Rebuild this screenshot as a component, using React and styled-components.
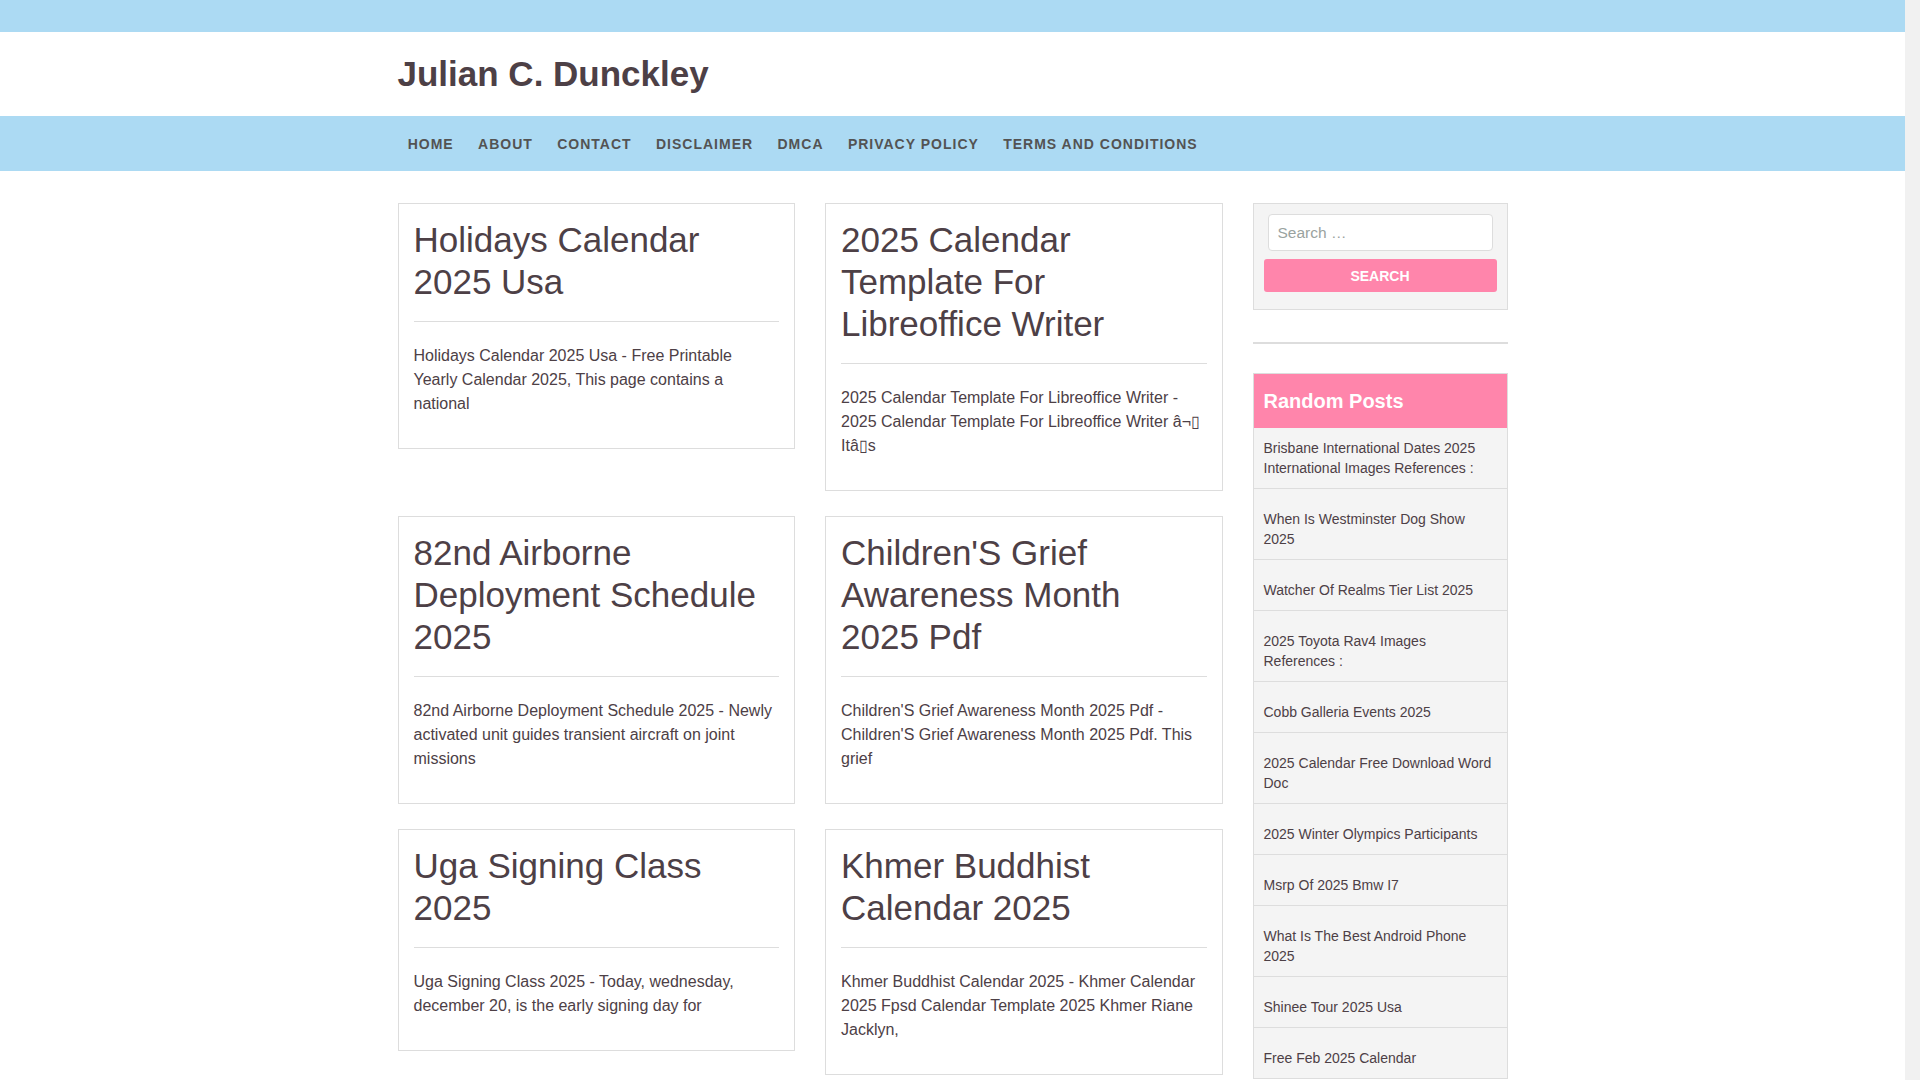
import React from "react";
import styled, { createGlobalStyle } from "styled-components";

const GlobalStyle = createGlobalStyle`
  html {
    margin: 0;
    padding: 0 15px 0 0;
    background: #f1f1f1;
  }
  body {
    margin: 0;
    padding: 0;
    background: #fff;
    font-family: "Liberation Sans", Arial, sans-serif;
    color: #4d4046;
    -webkit-font-smoothing: antialiased;
  }
  * { box-sizing: border-box; }
`;

const TopBar = styled.div`
  height: 32px;
  background: #acdaf3;
`;

const Container = styled.div`
  max-width: 1140px;
  margin: 0 auto;
  padding: 0 15px;
`;

const Header = styled.header`
  height: 84px;
  background: #fff;
`;

const HeaderInner = styled(Container)`
  height: 100%;
  display: flex;
  align-items: center;
`;

const SiteTitle = styled.h1`
  margin: 0;
  font-size: 35px;
  line-height: 42px;
  font-weight: 700;
  color: #4d4046;
`;

const NavBar = styled.nav`
  height: 55px;
  background: #acdaf3;
`;

const NavList = styled(Container)`
  height: 100%;
  display: flex;
  align-items: center;
`;

const NavItems = styled.ul`
  list-style: none;
  margin: 0 0 0 -2px;
  padding: 0;
  display: flex;
`;

const NavLink = styled.li`
  padding: 0 12.2px;
  font-size: 14px;
  font-weight: 700;
  letter-spacing: 1px;
  text-transform: uppercase;
  color: #535353;
  line-height: 20px;
`;

const Main = styled(Container)`
  display: grid;
  grid-template-columns: 825px 255px;
  column-gap: 30px;
  align-items: start;
  padding-top: 32px;
  padding-bottom: 60px;
`;

const PostGrid = styled.div`
  display: grid;
  grid-template-columns: 1fr 1fr;
  column-gap: 30px;
  row-gap: 25px;
  align-items: start;
`;

const Card = styled.article`
  border: 1px solid #ddd;
  background: #fff;
  padding: 15px;
`;

const CardTitle = styled.h2`
  margin: 0 0 18px;
  font-size: 35px;
  line-height: 42px;
  font-weight: 400;
  color: #4d4046;
`;

const Rule = styled.hr`
  margin: 0 0 22px;
  border: 0;
  border-top: 1px solid #ddd;
`;

const Excerpt = styled.p`
  margin: 0 0 17px;
  font-size: 16px;
  line-height: 24px;
  color: #4d4046;
`;

const Sidebar = styled.aside`
  display: flex;
  flex-direction: column;
`;

const SearchBox = styled.form`
  border: 1px solid #ddd;
  background: #f4f4f4;
  padding: 10px 10px 17px;
  display: flex;
  flex-direction: column;
  gap: 8px;
`;

const SearchInput = styled.input`
  margin: 0 4px;
  height: 37px;
  border: 1px solid #ddd;
  border-radius: 4px;
  background: #fff;
  padding: 0 9px;
  font-family: "Liberation Sans", Arial, sans-serif;
  font-size: 15.5px;
  color: #4d4046;
  outline: none;
  &::placeholder { color: #9aa3a0; }
`;

const SearchButton = styled.button`
  height: 33px;
  border: 0;
  border-radius: 3px;
  background: #ff85ab;
  color: #fff;
  font-family: "Liberation Sans", Arial, sans-serif;
  font-size: 14px;
  font-weight: 700;
  text-transform: uppercase;
  cursor: pointer;
`;

const Divider = styled.div`
  height: 2px;
  background: #ddd;
  margin: 32px 0 29px;
`;

const Widget = styled.section`
  border: 1px solid #ddd;
  background: #f4f4f4;
`;

const WidgetTitle = styled.h3`
  margin: 0;
  background: #ff85ab;
  color: #fff;
  font-size: 20px;
  line-height: 24px;
  font-weight: 700;
  padding: 15px 10px;
`;

const PostList = styled.ul`
  list-style: none;
  margin: 0;
  padding: 0;
`;

const PostItem = styled.li`
  padding: 10px;
  font-size: 14px;
  line-height: 20px;
  color: #4d4046;
  & + & {
    border-top: 1px solid #ddd;
    padding-top: 20px;
  }
`;

const navItems = ["Home", "About", "Contact", "Disclaimer", "DMCA", "Privacy Policy", "Terms and Conditions"];

const posts = [
  {
    title: "Holidays Calendar 2025 Usa",
    excerpt: "Holidays Calendar 2025 Usa - Free Printable Yearly Calendar 2025, This page contains a national",
  },
  {
    title: "2025 Calendar Template For Libreoffice Writer",
    excerpt: "2025 Calendar Template For Libreoffice Writer - 2025 Calendar Template For Libreoffice Writer â¬▯ Itâ▯s",
  },
  {
    title: "82nd Airborne Deployment Schedule 2025",
    excerpt: "82nd Airborne Deployment Schedule 2025 - Newly activated unit guides transient aircraft on joint missions",
  },
  {
    title: "Children'S Grief Awareness Month 2025 Pdf",
    excerpt: "Children'S Grief Awareness Month 2025 Pdf - Children'S Grief Awareness Month 2025 Pdf. This grief",
  },
  {
    title: "Uga Signing Class 2025",
    excerpt: "Uga Signing Class 2025 - Today, wednesday, december 20, is the early signing day for",
  },
  {
    title: "Khmer Buddhist Calendar 2025",
    excerpt: "Khmer Buddhist Calendar 2025 - Khmer Calendar 2025 Fpsd Calendar Template 2025 Khmer Riane Jacklyn,",
  },
];

const randomPosts = [
  "Brisbane International Dates 2025 International Images References :",
  "When Is Westminster Dog Show 2025",
  "Watcher Of Realms Tier List 2025",
  "2025 Toyota Rav4 Images References :",
  "Cobb Galleria Events 2025",
  "2025 Calendar Free Download Word Doc",
  "2025 Winter Olympics Participants",
  "Msrp Of 2025 Bmw I7",
  "What Is The Best Android Phone 2025",
  "Shinee Tour 2025 Usa",
  "Free Feb 2025 Calendar",
];

export default function App() {
  return (
    <>
      <GlobalStyle />
      <TopBar />
      <Header>
        <HeaderInner>
          <SiteTitle>Julian C. Dunckley</SiteTitle>
        </HeaderInner>
      </Header>
      <NavBar>
        <NavList>
          <NavItems>
            {navItems.map((n) => (
              <NavLink key={n}>{n}</NavLink>
            ))}
          </NavItems>
        </NavList>
      </NavBar>
      <Main>
        <PostGrid>
          {posts.map((p) => (
            <Card key={p.title}>
              <CardTitle>{p.title}</CardTitle>
              <Rule />
              <Excerpt>{p.excerpt}</Excerpt>
            </Card>
          ))}
        </PostGrid>
        <Sidebar>
          <SearchBox onSubmit={(e) => e.preventDefault()}>
            <SearchInput type="search" placeholder="Search …" />
            <SearchButton type="submit">Search</SearchButton>
          </SearchBox>
          <Divider />
          <Widget>
            <WidgetTitle>Random Posts</WidgetTitle>
            <PostList>
              {randomPosts.map((r) => (
                <PostItem key={r}>{r}</PostItem>
              ))}
            </PostList>
          </Widget>
        </Sidebar>
      </Main>
    </>
  );
}
